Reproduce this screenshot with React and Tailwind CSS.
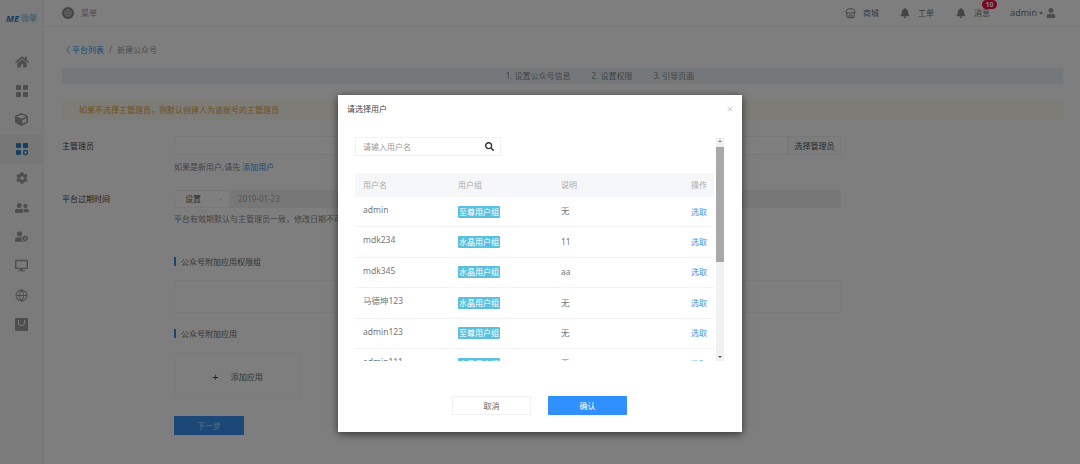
import React from "react";
import { FaHome, FaCube, FaUserFriends, FaUserCog, FaDesktop, FaBell, FaUser, FaSearch, FaCog, FaCaretDown } from "react-icons/fa";
import { Globe, Store } from "lucide-react";

const Grid = ({ blue }) => (
  <svg width="14" height="14" viewBox="0 0 14 14" fill="currentColor">
    <rect x="1" y="1" width="5" height="5" rx="1" />
    <rect x="8" y="1" width="5" height="5" rx="1" />
    <rect x="1" y="8" width="5" height="5" rx="1" />
    {blue ? <circle cx="10.5" cy="10.5" r="2" fill="none" stroke="currentColor" strokeWidth="1.3" /> : <rect x="8" y="8" width="5" height="5" rx="1" />}
  </svg>
);

const Tray = () => (
  <svg width="13" height="13" viewBox="0 0 13 13" fill="currentColor">
    <path d="M1 0h11a1 1 0 0 1 1 1v11a1 1 0 0 1-1 1H1a1 1 0 0 1-1-1V1a1 1 0 0 1 1-1zm2 2v2.5a3.5 3.5 0 0 0 7 0V2H9v2.5a2.5 2.5 0 0 1-5 0V2z" fillRule="evenodd" />
  </svg>
);

const sideItems = [
  <FaHome size={14} />, <Grid />, <FaCube size={13} />, <Grid blue />, <FaCog size={12} />,
  <FaUserFriends size={14} />, <FaUserCog size={13} />, <FaDesktop size={13} />, <Globe size={13} />, <Tray />,
];

const rows = [
  ["admin", "至尊用户组", "无"],
  ["mdk234", "水晶用户组", "11"],
  ["mdk345", "水晶用户组", "aa"],
  ["马德坤123", "水晶用户组", "无"],
  ["admin123", "至尊用户组", "无"],
  ["admin111", "水晶用户组", "无"],
];

const Section = ({ children }) => (
  <div className="ml-[112px] border-l-2 border-[#3a8ee6] pl-[5px] text-[8px] leading-[9px] text-[#666]">{children}</div>
);

export default function App() {
  return (
    <div className="relative flex h-[464px] w-[1080px] overflow-hidden bg-[#fdfdfd] text-[8px] text-[#666] [font-family:'Noto_Sans','Noto_Sans_CJK_SC',sans-serif]">
      <aside className="flex h-full w-[44px] shrink-0 flex-col border-r border-[#eee] bg-[#f6f6f6]">
        <div className="flex h-[27px] items-center justify-center gap-[2px] pt-[18px] pb-[12px]">
          <span className="text-[9px] font-bold italic leading-none text-[#2f7fc4]">ME</span>
          <span className="text-[8px] leading-none text-[#7fb0d4]">微擎</span>
        </div>
        <div className="mt-[17px] flex flex-col">
          {sideItems.map((icon, i) => (
            <div key={i} className={`flex h-[29.2px] items-center justify-center ${i === 3 ? "bg-[#eeeeee] text-[#2f7fc4]" : "text-[#9c9c9c]"}`}>
              {icon}
            </div>
          ))}
        </div>
      </aside>

      <div className="flex min-w-0 flex-1 flex-col">
        <header className="flex h-[27px] shrink-0 items-center border-b border-[#eee] pl-[18px] pr-[24px] text-[8px]">
          <span className="flex h-[12px] w-[12px] items-center justify-center rounded-full bg-[#8a8a8a]">
            <Globe size={8} className="text-[#ddd]" />
          </span>
          <span className="ml-[7px] text-[#999]">菜单</span>
          <div className="ml-auto flex items-center text-[#777]">
            <Store size={11} className="text-[#777]" />
            <span className="ml-[7px]">商城</span>
            <FaBell size={10} className="ml-[21px] text-[#888]" />
            <span className="ml-[8px]">工单</span>
            <FaBell size={10} className="ml-[22px] text-[#888]" />
            <span className="relative ml-[8px]">
              消息
              <span className="absolute -top-[7px] left-[8px] flex h-[9px] w-[15px] items-center justify-center rounded-full bg-[#ee0a3c] text-[7px] font-bold leading-none text-white">10</span>
            </span>
            <span className="ml-[20px] text-[9px]">admin</span>
            <FaCaretDown size={6} className="ml-[1px]" />
            <FaUser size={10} className="ml-[2px] text-[#999]" />
          </div>
        </header>

        <main className="flex-1 pl-[18px] pr-[17px]">
          <div className="mt-[17px] flex h-[11px] items-center text-[8px] leading-none">
            <span className="text-[#3a8ee6]">〈 平台列表</span>
            <span className="ml-[5px] text-[#999]">/</span>
            <span className="ml-[5px] text-[#999]">新建公众号</span>
          </div>

          <div className="mt-[13px] flex h-[16px] items-center justify-center gap-[21px] bg-[#e8f0f6] pl-[75px] text-[8px] text-[#888]">
            <span>1. 设置公众号信息</span>
            <span>2. 设置权限</span>
            <span>3. 引导页面</span>
          </div>

          <div className="mt-[16px] flex h-[20px] items-center bg-[#fdf9ed] pl-[17px] text-[8px] text-[#e0a040]">
            如果不选择主管理员，则默认创建人为该账号的主管理员
          </div>

          <div className="mt-[16px] mr-[222px] flex h-[19px] items-center">
            <span className="w-[112px] shrink-0 text-[8px] text-[#444]">主管理员</span>
            <div className="h-full flex-1 border border-[#f0f0f0] bg-white" />
            <div className="flex h-full w-[53px] items-center justify-center border border-[#f0f0f0] bg-[#fafafa] text-[8px] text-[#555]">选择管理员</div>
          </div>
          <div className="ml-[112px] mt-[6px] text-[8px] leading-[11px] text-[#888]">
            如果是新用户,请先 <span className="text-[#3a8ee6]">添加用户</span>
          </div>

          <div className="mt-[18px] mr-[222px] flex h-[18px] items-center">
            <span className="w-[112px] shrink-0 text-[8px] text-[#444]">平台过期时间</span>
            <div className="flex h-full w-[56px] items-center justify-between border border-[#f0f0f0] bg-white pl-[10px] pr-[7px] text-[#555]">
              <span>设置</span>
              <span className="text-[#ccc]">-</span>
            </div>
            <div className="flex h-full flex-1 items-center bg-[#eeeeee] pl-[8px] text-[8px] text-[#aaa]">2019-01-23</div>
          </div>
          <div className="ml-[112px] mt-[5px] text-[8px] leading-[11px] text-[#888]">
            平台有效期默认与主管理员一致，修改日期不可超过主管理员有效期
          </div>

          <div className="mt-[33px]"><Section>公众号附加应用权限组</Section></div>
          <div className="ml-[112px] mr-[222px] mt-[14px] h-[33px] border border-[#f2f2f2]" />
          <div className="mt-[16px]"><Section>公众号附加应用</Section></div>
          <div className="ml-[112px] mt-[16px] flex h-[45px] w-[127px] items-center justify-center gap-[12px] border border-[#f4f4f4] text-[8px] text-[#666]">
            <span className="text-[11px] leading-none text-[#444]">+</span>
            <span>添加应用</span>
          </div>
          <button className="ml-[112px] mt-[17px] flex h-[19px] w-[70px] items-center justify-center bg-[#3890f0] text-[8px] text-[#c8dcf0]">下一步</button>
        </main>
      </div>

      <div className="absolute inset-0 bg-black/50" />

      <div className="absolute left-[338px] top-[95px] flex h-[337px] w-[404px] flex-col bg-white shadow-[0_2px_8px_rgba(0,0,0,0.6)]">
        <div className="flex h-[26px] items-center justify-between pl-[9px] pr-[9px] pt-[1px] text-[8px] text-[#444]">
          <span>请选择用户</span>
          <span className="text-[11px] leading-none text-[#ccc]">×</span>
        </div>

        <div className="ml-[17px] mt-[16px] flex h-[224px] w-[369px]">
          <div className="w-[359px] overflow-hidden">
            <div className="flex h-[19px] w-[146px] items-center justify-between border border-[#f2f2f2] pl-[7px] pr-[6px] text-[8px] text-[#999]">
              <span>请输入用户名</span>
              <FaSearch size={9} className="text-[#333]" />
            </div>
            <div className="mt-[17px] flex h-[24px] items-center bg-[#f6f7f9] text-[8px] text-[#aaa]">
              <span className="w-[103px] pl-[8px]">用户名</span>
              <span className="w-[103px]">用户组</span>
              <span className="flex-1">说明</span>
              <span className="pr-[7px]">操作</span>
            </div>
            {rows.map((r) => (
              <div key={r[0]} className="flex h-[30.4px] items-center border-b border-[#f3f3f3] text-[#777]">
                <span className="w-[103px] pb-[3px] pl-[8px] text-[8.5px] leading-none">{r[0]}</span>
                <span className="w-[103px]">
                  <span className="inline-flex h-[12px] w-[42px] items-center justify-center rounded-[1px] bg-[#5bc0de] text-[8px] leading-none text-white">{r[1]}</span>
                </span>
                <span className="flex-1 text-[8.5px] leading-none">{r[2]}</span>
                <span className="pr-[7px] text-[8px] text-[#4a90e2]">选取</span>
              </div>
            ))}
          </div>
          <div className="ml-[2px] flex h-full w-[8px] flex-col items-center bg-[#f1f1f1]">
            <div className="flex h-[10px] items-start justify-center pt-[3px]">
              <div className="h-0 w-0 border-x-[2px] border-b-[2px] border-x-transparent border-b-[#888]" />
            </div>
            <div className="h-[115px] w-full bg-[#a8a8a8]" />
            <div className="mt-auto flex h-[10px] items-end justify-center pb-[3px]">
              <div className="h-0 w-0 border-x-[2px] border-t-[2px] border-x-transparent border-t-[#555]" />
            </div>
          </div>
        </div>

        <div className="mt-[35px] flex justify-center gap-[17px] pr-[1px]">
          <button className="h-[19px] w-[79px] border border-[#f2f2f2] bg-white text-[8px] text-[#666]">取消</button>
          <button className="h-[19px] w-[79px] rounded-[1px] bg-[#3090ff] text-[8px] text-white">确认</button>
        </div>
      </div>
    </div>
  );
}
